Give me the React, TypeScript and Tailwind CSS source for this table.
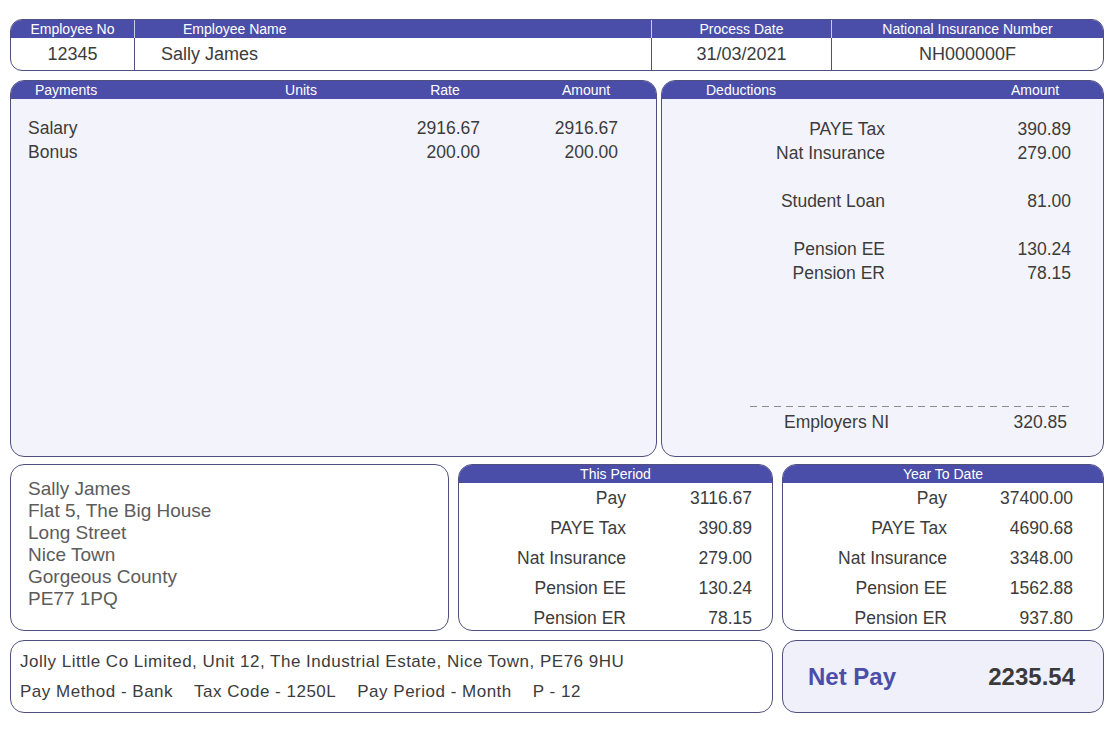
const payments = [
  { label: "Salary", units: "", rate: "2916.67", amount: "2916.67" },
  { label: "Bonus", units: "", rate: "200.00", amount: "200.00" },
];

const deductions: ([string, string] | null)[] = [
  ["PAYE Tax", "390.89"],
  ["Nat Insurance", "279.00"],
  null,
  ["Student Loan", "81.00"],
  null,
  ["Pension EE", "130.24"],
  ["Pension ER", "78.15"],
];

const thisPeriod: [string, string][] = [
  ["Pay", "3116.67"],
  ["PAYE Tax", "390.89"],
  ["Nat Insurance", "279.00"],
  ["Pension EE", "130.24"],
  ["Pension ER", "78.15"],
];

const yearToDate: [string, string][] = [
  ["Pay", "37400.00"],
  ["PAYE Tax", "4690.68"],
  ["Nat Insurance", "3348.00"],
  ["Pension EE", "1562.88"],
  ["Pension ER", "937.80"],
];

function Summary({
  title,
  rows,
  width,
  cols,
}: {
  title: string;
  rows: [string, string][];
  width: string;
  cols: string;
}) {
  return (
    <div className={`${width} h-[167px] rounded-[14px] border border-[#50507e] bg-white overflow-hidden`}>
      <div className="h-[18px] bg-[#4a4ea8] text-white text-[14px] leading-[18px] text-center">
        {title}
      </div>
      <div>
        {rows.map(([label, value]) => (
          <div key={label} className={`grid ${cols} h-[30px] items-center text-[17.5px] text-[#3c3c3c]`}>
            <span className="text-right">{label}</span>
            <span className="text-right">{value}</span>
          </div>
        ))}
      </div>
    </div>
  );
}

export default function App() {
  return (
    <div className="w-[1116px] h-[754px] bg-white px-[10px] pt-[19px] font-['Liberation_Sans',Arial,sans-serif] text-[#3c3c3c]">
      {/* Employee details */}
      <div className="w-[1094px] h-[52px] rounded-[12px] border border-[#50507e] overflow-hidden bg-white">
        <div className="grid grid-cols-[123px_517px_180px_1fr] h-[18px] bg-[#4a4ea8] text-white text-[14px] leading-[18px]">
          <span className="text-center">Employee No</span>
          <span className="border-l border-[#c9cbe8] pl-[48px]">Employee Name</span>
          <span className="border-l border-[#c9cbe8] text-center">Process Date</span>
          <span className="border-l border-[#c9cbe8] text-center">National Insurance Number</span>
        </div>
        <div className="grid grid-cols-[123px_517px_180px_1fr] h-[32px] text-[18px] leading-[32px]">
          <span className="text-center">12345</span>
          <span className="border-l border-[#50507e] pl-[26px]">Sally James</span>
          <span className="border-l border-[#50507e] text-center">31/03/2021</span>
          <span className="border-l border-[#50507e] text-center">NH000000F</span>
        </div>
      </div>

      {/* Payments and deductions */}
      <div className="flex gap-[4px] mt-[9px]">
        <div className="w-[647px] h-[377px] rounded-[14px] border border-[#50507e] bg-[#f3f3fb] overflow-hidden">
          <div className="flex h-[18px] bg-[#4a4ea8] text-white text-[14px] leading-[18px]">
            <span className="w-[240px] pl-[24px]">Payments</span>
            <span className="w-[100px] text-center">Units</span>
            <span className="w-[59px]" />
            <span className="w-[70px] text-center">Rate</span>
            <span className="w-[74px]" />
            <span className="w-[64px] text-center">Amount</span>
          </div>
          <div className="pt-[17px]">
            {payments.map((p) => (
              <div key={p.label} className="flex h-[24px] items-center text-[17.5px]">
                <span className="w-[240px] pl-[17px]">{p.label}</span>
                <span className="w-[100px] text-center">{p.units}</span>
                <span className="w-[59px]" />
                <span className="w-[70px] text-right">{p.rate}</span>
                <span className="w-[74px]" />
                <span className="w-[64px] text-right whitespace-nowrap">{p.amount}</span>
              </div>
            ))}
          </div>
        </div>

        <div className="w-[443px] h-[377px] rounded-[14px] border border-[#50507e] bg-[#f3f3fb] overflow-hidden flex flex-col">
          <div className="flex h-[18px] bg-[#4a4ea8] text-white text-[14px] leading-[18px]">
            <span className="w-[336px] pl-[44px]">Deductions</span>
            <span className="w-[74px] text-center">Amount</span>
          </div>
          <div className="pt-[17px]">
            {deductions.map((d, i) => (
              <div key={i} className="grid grid-cols-[223px_186px] h-[24px] items-center text-[17.5px]">
                <span className="text-right">{d ? d[0] : ""}</span>
                <span className="text-right">{d ? d[1] : ""}</span>
              </div>
            ))}
          </div>
          <div className="mt-auto pb-[23px]">
            <div className="ml-[88px] w-[321px] h-px bg-[repeating-linear-gradient(to_right,#8a8a8a_0_7px,transparent_7px_12px)]" />
            <div className="grid grid-cols-[227px_178px] h-[24px] mt-[2px] items-center text-[17.5px]">
              <span className="text-right">Employers NI</span>
              <span className="text-right">320.85</span>
            </div>
          </div>
        </div>
      </div>

      {/* Address and summaries */}
      <div className="flex gap-[9px] mt-[7px]">
        <div className="w-[439px] h-[167px] rounded-[14px] border border-[#50507e] bg-white pl-[17px] pt-[13px] text-[19px] leading-[22px] text-[#5c5c5c]">
          <div>Sally James</div>
          <div>Flat 5, The Big House</div>
          <div>Long Street</div>
          <div>Nice Town</div>
          <div>Gorgeous County</div>
          <div>PE77 1PQ</div>
        </div>
        <Summary title="This Period" rows={thisPeriod} width="w-[315px]" cols="grid-cols-[167px_126px]" />
        <Summary title="Year To Date" rows={yearToDate} width="w-[322px]" cols="grid-cols-[164px_126px]" />
      </div>

      {/* Company and net pay */}
      <div className="flex gap-[9px] mt-[9px]">
        <div className="w-[763px] h-[73px] rounded-[14px] border border-[#50507e] bg-white pl-[9px] pt-[6px] text-[17px] leading-[30px] tracking-[0.5px]">
          <div>Jolly Little Co Limited, Unit 12, The Industrial Estate, Nice Town, PE76 9HU</div>
          <div className="flex gap-[21px]">
            <span>Pay Method - Bank</span>
            <span>Tax Code - 1250L</span>
            <span>Pay Period - Month</span>
            <span>P - 12</span>
          </div>
        </div>
        <div className="w-[322px] h-[73px] rounded-[14px] border border-[#50507e] bg-[#eff0fa] flex items-center justify-between pl-[25px] pr-[28px] text-[24px] font-bold">
          <span className="text-[#4a4ea8]">Net Pay</span>
          <span className="text-[#3a3a3a]">2235.54</span>
        </div>
      </div>
    </div>
  );
}
